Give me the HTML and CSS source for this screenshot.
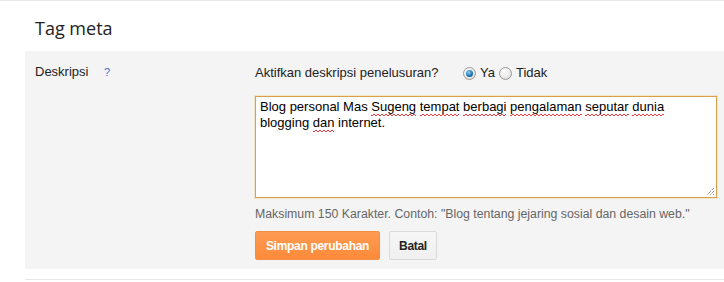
FILE: index.html
```html
<!DOCTYPE html>
<html lang="id">
<head>
<meta charset="utf-8">
<title>Tag meta</title>
<link rel="stylesheet" href="styles.css">
</head>
<body>
<div class="page">
  <div class="header">
    <h1 class="title">Tag meta</h1>
  </div>
  <div class="panel">
    <div class="label-col">
      <span class="label">Deskripsi</span>
      <span class="help">?</span>
    </div>
    <div class="content">
      <div class="question-row">
        <span class="question">Aktifkan deskripsi penelusuran?</span>
        <span class="options">
          <span class="radio checked"></span><span class="opt-label">Ya</span>
          <span class="radio"></span><span class="opt-label">Tidak</span>
        </span>
      </div>
      <div class="textarea">
        <div class="textarea-text">Blog personal Mas <span class="sp">Sugeng</span> <span class="sp">tempat</span> <span class="sp">berbagi</span> <span class="sp">pengalaman</span> <span class="sp">seputar</span> <span class="sp">dunia</span> blogging <span class="sp">dan</span> internet.</div>
        <svg class="grip" width="10" height="10" viewBox="0 0 10 10">
          <path d="M9 2 L2 9 M9 5 L5 9 M9 8 L8 9" stroke="#666" stroke-width="1" stroke-dasharray="1 1" fill="none"/>
        </svg>
      </div>
      <div class="hint">Maksimum 150 Karakter. Contoh: "Blog tentang jejaring sosial dan desain web."</div>
      <div class="actions">
        <button class="btn btn-primary">Simpan perubahan</button>
        <button class="btn btn-default">Batal</button>
      </div>
    </div>
  </div>
  <div class="bottom-line"></div>
</div>
</body>
</html>
```

FILE: styles.css
```css
html, body {
  margin: 0;
  padding: 0;
  background: #fff;
}
body {
  font-family: "Liberation Sans", Arial, sans-serif;
  font-size: 13px;
  color: #222;
}
.page {
  border-top: 1px solid #e8e8e8;
}
.header {
  height: 50px;
  padding-left: 35px;
  box-sizing: border-box;
}
.title {
  margin: 0;
  padding-top: 15px;
  font-family: "Open Sans", "Liberation Sans", sans-serif;
  font-weight: normal;
  font-size: 18px;
  line-height: 24px;
  color: #222;
}
.panel {
  margin-left: 25px;
  background: #f4f4f4;
  display: grid;
  grid-template-columns: 230px 1fr;
  height: 218px;
  box-sizing: border-box;
}
.label-col {
  padding: 13px 0 0 10px;
  line-height: 16px;
}
.label {
  color: #222;
}
.help {
  margin-left: 12px;
  font-size: 11px;
  color: #3b73d6;
}
.content {
  padding-top: 14px;
}
.question-row {
  display: flex;
  align-items: center;
  height: 16px;
  line-height: 16px;
}
.question {
  width: 208px;
}
.options {
  display: flex;
  align-items: center;
}
.radio {
  width: 11px;
  height: 11px;
  border-radius: 50%;
  border: 1px solid #9a9a9a;
  background: radial-gradient(circle at 40% 35%, #ffffff 0%, #e8e8e8 60%, #cfcfcf 100%);
  box-sizing: content-box;
  position: relative;
}
.radio.checked::after {
  content: "";
  position: absolute;
  left: 2px;
  top: 2px;
  width: 7px;
  height: 7px;
  border-radius: 50%;
  background: radial-gradient(circle at 40% 35%, #8fd0f5 0%, #1c78b8 55%, #0d3f6e 100%);
}
.opt-label {
  margin-left: 4px;
  margin-right: 4px;
}
.textarea {
  position: relative;
  margin-top: 15px;
  width: 462px;
  height: 102px;
  box-sizing: border-box;
  background: #fff;
  border: 1px solid #d7a24c;
  box-shadow: 0 0 0 1px rgba(240, 200, 120, 0.35);
  padding: 2px 4px;
  color: #000;
  line-height: 16px;
}
.sp {
  padding-bottom: 2px;
  background-image:
    linear-gradient(135deg, transparent 45%, #e23a3a 45%, #e23a3a 60%, transparent 60%),
    linear-gradient(45deg, transparent 45%, #e23a3a 45%, #e23a3a 60%, transparent 60%);
  background-size: 4px 2px;
  background-position: 0 100%, 2px 100%;
  background-repeat: repeat-x;
}
.grip {
  position: absolute;
  right: 1px;
  bottom: 1px;
}
.hint {
  margin-top: 8px;
  line-height: 16px;
  font-size: 12.3px;
  color: #666;
}
.actions {
  margin-top: 9px;
  display: flex;
  gap: 9px;
}
.btn {
  height: 29px;
  font-family: "Liberation Sans", Arial, sans-serif;
  font-size: 12px;
  letter-spacing: -0.3px;
  font-weight: bold;
  border-radius: 2px;
  padding: 0;
  box-sizing: border-box;
  white-space: nowrap;
  cursor: pointer;
}
.btn-primary {
  color: #fff;
  background: linear-gradient(#fe9b52, #fc8a3a);
  border: 1px solid #f18f42;
  width: 125px;
}
.btn-default {
  color: #222;
  background: linear-gradient(#f6f6f6, #f0f0f0);
  border: 1px solid #dadada;
  width: 48px;
}
.bottom-line {
  margin-left: 25px;
  margin-top: 10px;
  height: 1px;
  background: #e8e8e8;
}
```
